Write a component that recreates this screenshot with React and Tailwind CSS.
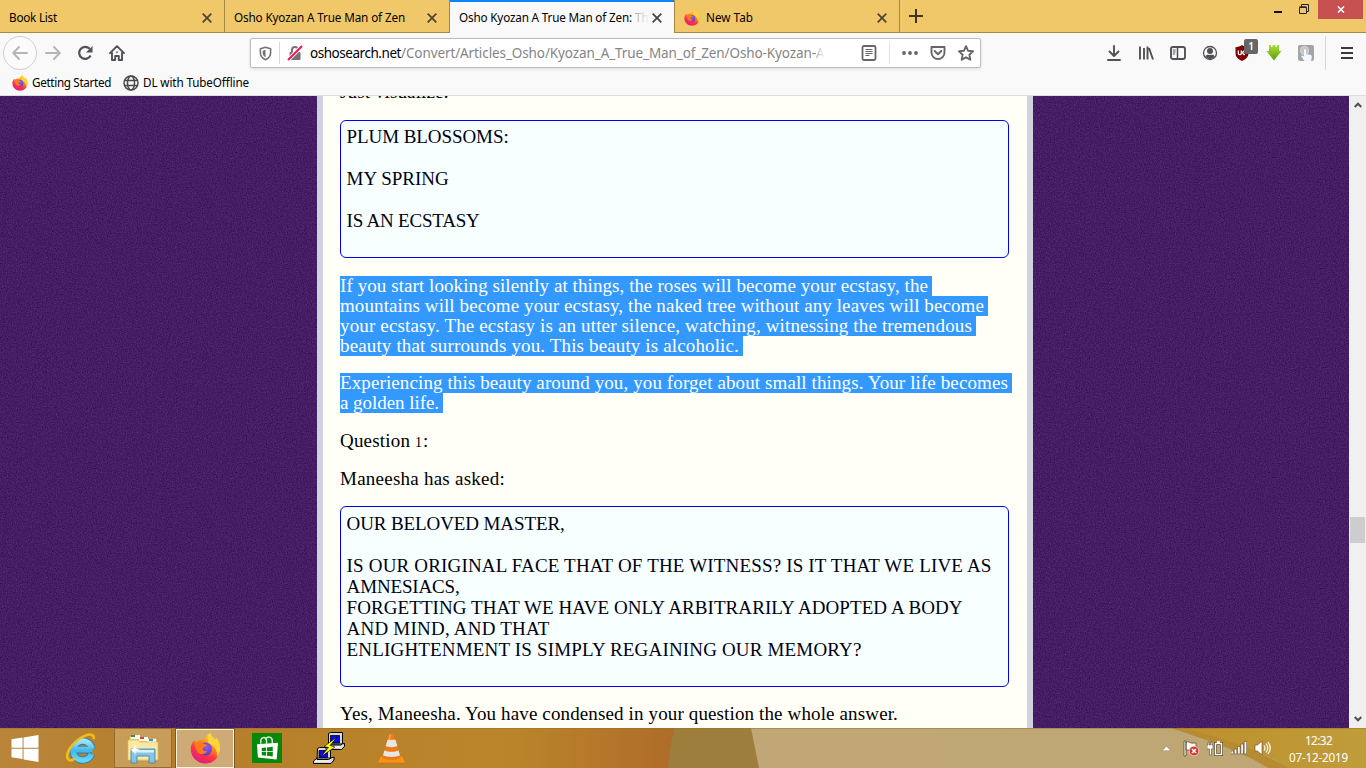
import React, { useLayoutEffect, useRef, useState } from "react";

/* A single line of text spaced evenly to a given width. */
function Fit({ w, className = "", children }) {
  const ref = useRef(null);
  const [gap, setGap] = useState(0);
  useLayoutEffect(() => {
    const natural = ref.current.getBoundingClientRect().width;
    setGap((w - natural) / children.length);
  }, [w, children]);
  return (
    <span ref={ref} className={"inline-block whitespace-pre " + className} style={{ letterSpacing: gap + "px" }}>
      {children}
    </span>
  );
}

function Firefox({ className, id }) {
  return (
    <svg viewBox="0 0 32 32" className={className}>
      <defs>
        <linearGradient id={id + "a"} x1="0.8" y1="0" x2="0.25" y2="1">
          <stop offset="0" stopColor="#fff44f" />
          <stop offset="0.35" stopColor="#ff980e" />
          <stop offset="0.65" stopColor="#ff3647" />
          <stop offset="1" stopColor="#e31587" />
        </linearGradient>
        <radialGradient id={id + "b"} cx="0.6" cy="0.35" r="0.7">
          <stop offset="0" stopColor="#9059ff" />
          <stop offset="1" stopColor="#4a3fb5" />
        </radialGradient>
      </defs>
      <path fill={"url(#" + id + "a)"} d="M4 8c1 1 2 1.500 3 1.500C9 7 12 6.500 15 7c1-3 3-5.500 6-7 .5 3 3 4 5 7 1-.5 1-1 1-2 2.500 3 4 6.500 4 11 0 9-6.500 15.500-15 15.500S.8 25 .8 16.500C.8 13 2 10.500 4 8z" />
      <path fill="#ffd43a" d="M21 0c.5 3 3 4 5 7 1-.5 1-1 1-2 2.500 3 4 6.500 4 11 0 3-1 6-3 9 .5-7-3-12-9-15-2-3 0-7 2-10z" />
      <circle cx="16" cy="16.500" r="6.600" fill={"url(#" + id + "b)"} />
      <path fill="#ff7b1c" d="M4 8c1 1 2 1.500 3 1.500 2-1 5-1 6.500 1 1 1 3 1.500 4 1.500-.4 2.500-4 2-4.500 4-.3 2 2 3.500 5 2.500-2 4-8 4.500-10.500.500C5 16 5 12 4 8z" />
    </svg>
  );
}

function Cross({ className = "" }) {
  return (
    <svg viewBox="0 0 10 10" className={"h-[10px] w-[10px] shrink-0 " + className} fill="none" stroke="#4a4335" strokeWidth="1.7">
      <path d="M.7.7l8.600 8.600M9.300.7L.7 9.300" />
    </svg>
  );
}

function TabStrip() {
  const tab = "flex h-[33px] shrink-0 items-center border-r border-b border-[#a58845] pr-[12px] pl-[9px] pt-[3px]";
  return (
    <div className="flex h-[33px] bg-[#f0c869] font-['Noto_Sans',sans-serif] text-[11.7px] text-black">
      <div className={tab + " w-[225px]"}>
        <Fit w={48}>Book List</Fit>
        <Cross className="ml-auto" />
      </div>
      <div className={tab + " w-[225px]"}>
        <Fit w={171}>Osho Kyozan A True Man of Zen</Fit>
        <Cross className="ml-auto" />
      </div>
      <div className="flex h-[33px] w-[224px] shrink-0 items-center border-t-2 border-[#0a84ff] bg-[#f9f9fa] pr-[12px] pl-[9px]">
        <span className="flex w-[189px] whitespace-nowrap">
          <Fit w={173}>Osho Kyozan A True Man of Zen:</Fit>
          <span className="bg-gradient-to-r from-[#999] to-[#f3f3f4] bg-clip-text pl-[3px] text-transparent">Th</span>
        </span>
        <Cross className="ml-auto" />
      </div>
      <div className={tab + " w-[226px] border-l"}>
        <Firefox className="h-4 w-4" id="t" />
        <Fit w={47} className="ml-[6px]">New Tab</Fit>
        <Cross className="ml-auto" />
      </div>
      <div className="flex flex-1 items-start border-b border-[#a58845]">
        <svg viewBox="0 0 14 14" className="mt-[9px] ml-[9px] h-[14px] w-[14px]" stroke="#3d3420" strokeWidth="2">
          <path d="M7 0v14M0 7h14" />
        </svg>
        <svg viewBox="0 0 8 3" className="mt-[11px] ml-auto h-[2px] w-[8px]" preserveAspectRatio="none"><path fill="#111" d="M0 0h8v3H0z" /></svg>
        <svg viewBox="0 0 10 10" className="mt-[4px] ml-[17px] h-[10px] w-[10px]" fill="none" stroke="#222">
          <path d="M.5 3.500h7v6h-7zM.5 2.800h7M2.500 2.500V.5h7v7h-2" />
        </svg>
        <div className="ml-[9px] flex h-[19px] w-[45px] items-center justify-center bg-[#c75050]">
          <svg viewBox="0 0 8 8" className="h-[7px] w-[8px]" stroke="#fff" strokeWidth="1.700"><path d="M.5.5l7 7M7.500.5l-7 7" /></svg>
        </div>
        <div className="w-[3px]" />
      </div>
    </div>
  );
}

const ico = "h-4 w-4 shrink-0";
const stroke = { fill: "none", stroke: "#505055", strokeWidth: 1.9, strokeLinecap: "round", strokeLinejoin: "round" };

function Toolbar() {
  return (
    <div className="flex h-[40px] items-center bg-[#f9f9fa] pl-[3px]">
      <div className="flex h-[34px] w-[34px] items-center justify-center rounded-full border border-[#cfcfd1] bg-[#fbfbfb]">
        <svg viewBox="0 0 16 16" className={ico} {...stroke} stroke="#b5b5b6"><path d="M15 8H1.500M7 2L1.200 8 7 14" /></svg>
      </div>
      <svg viewBox="0 0 16 16" className={ico + " ml-[8px]"} {...stroke} stroke="#b5b5b6"><path d="M1 8h13.500M9 2l5.800 6L9 14" /></svg>
      <svg viewBox="0 0 16 16" className={ico + " ml-[16px]"} {...stroke} strokeWidth="2.200" strokeLinecap="butt"><path d="M13.600 10.500a6 6 0 1 1-1-6.700" /><path fill="#505055" stroke="none" d="M15.500 1v6.500H9z" /></svg>
      <svg viewBox="0 0 16 16" className={ico + " ml-[16px]"} {...stroke}><path d="M1 8.200L8 1.200l7 7M3 8v7h3.200v-4h3.600v4H13V8" /><path strokeWidth="1.500" d="M8 7v.5" /></svg>

      <div className="ml-[125px] flex h-[30px] w-[731px] shrink-0 items-center rounded-[2px] border border-[#bdbdbf] bg-white pl-[8px] shadow-[0_1px_3px_rgba(0,0,0,0.12)]">
        <svg viewBox="0 0 14 16" className="h-[15px] w-[13px]" {...stroke} stroke="#737373" strokeWidth="1.700"><path d="M7 1.200l5.500 1.600v4.500c0 3.500-2 6-5.500 7.500C3.500 13.300 1.500 10.800 1.500 7.300V2.800z" /><path fill="#737373" stroke="none" d="M7 4v8C5 11 4 9.500 4 7.200V5z" /></svg>
        <div className="mx-[7px] h-[22px] w-px bg-[#d7d7db]" />
        <svg viewBox="0 0 16 16" className={ico}><path fill="none" stroke="#737373" strokeWidth="2" d="M5 8V5a3 3 0 0 1 6 0v3" /><rect x="2.500" y="7" width="11" height="8" rx="1" fill="#737373" /><path stroke="#fff" strokeWidth="4" d="M1 15L15 1" /><path stroke="#ff0f4f" strokeWidth="2" d="M1 15L15 1" /></svg>
        <div className="ml-[7px] flex w-[518px] overflow-hidden pt-[1px] font-['Noto_Sans',sans-serif] text-[13.5px] whitespace-nowrap">
          <Fit w={91} className="text-black">oshosearch.net</Fit>
          <Fit w={415} className="text-[#858585]">/Convert/Articles_Osho/Kyozan_A_True_Man_of_Zen/Osho-Kyozan-</Fit>
          <span className="bg-gradient-to-r from-[#aaa] to-white bg-clip-text text-transparent">A</span>
        </div>
        <svg viewBox="0 0 16 16" className={ico + " ml-[33px]"} {...stroke} stroke="#66666a" strokeWidth="1.800"><rect x="1.500" y="1" width="13" height="14" rx="1.500" /><path strokeWidth="1.100" strokeLinecap="butt" d="M4.500 4.500h7M4.500 6.500h7M4.500 8.500h7M4.500 10.500h4" /></svg>
        <div className="ml-[12px] h-[22px] w-px bg-[#e3e3e6]" />
        <svg viewBox="0 0 16 16" className={ico + " ml-[12px]"} fill="#66666a"><circle cx="2" cy="8" r="1.900" /><circle cx="8" cy="8" r="1.900" /><circle cx="14" cy="8" r="1.900" /></svg>
        <svg viewBox="0 0 16 16" className={ico + " ml-[12px]"} {...stroke} stroke="#66666a"><path d="M1.500 2h13v5.500a6.500 6.500 0 0 1-13 0zM4.700 6L8 9.200 11.300 6" /></svg>
        <svg viewBox="0 0 16 16" className={ico + " ml-[12px]"} {...stroke} stroke="#66666a" strokeWidth="1.900"><path d="M8 1.200l2 4.500 5 .6-3.600 3.400.9 5L8 12.300l-4.300 2.400.9-5L1 6.300l5-.6z" /></svg>
      </div>

      <svg viewBox="0 0 16 16" className={ico + " ml-[125px]"} {...stroke}><path d="M8 1v9.500M3.500 6.500L8 11l4.500-4.500M2 15h12" /></svg>
      <svg viewBox="0 0 16 16" className={ico + " ml-[16px]"} {...stroke} strokeLinecap="butt"><path d="M2 1.500v13M6 3v11.500M9.500 1.500v13M11 3l4 11.500" /></svg>
      <svg viewBox="0 0 16 16" className={ico + " ml-[16px]"} {...stroke}><rect x="1" y="2" width="14" height="12" rx="2" /><path strokeWidth="1.500" d="M7.500 2v12" /><path strokeWidth="1" d="M3.200 5h2M3.200 7h2M3.200 9h1.500" /></svg>
      <svg viewBox="0 0 16 16" className={ico + " ml-[16px]"} {...stroke} strokeWidth="1.300"><circle cx="8" cy="8" r="6.500" /><circle cx="8" cy="6" r="3" fill="#505055" stroke="none" /><path fill="#505055" stroke="none" d="M3.200 11.500C5 9 6 10 8 10s3-1 4.800 1.500C11 13.500 9.500 14 8 14s-3-.5-4.800-2.500z" /></svg>
      <div className="relative ml-[16px] h-4 w-4 shrink-0">
        <svg viewBox="0 0 16 16" className="h-4 w-4"><path fill="#800000" d="M8 0c2 1.500 4 2 6.500 2.300V8c0 4-2.500 6.200-6.500 8-4-1.800-6.500-4-6.500-8V2.300C4 2 6 1.500 8 0z" /><path fill="none" stroke="#fff" strokeWidth="1.300" d="M4.300 5.500v3c0 1.500 3 1.500 3 0v-3M11 9.500c-3 .5-3-4 0-3.500" /></svg>
        <span className="absolute -top-[6px] left-[10px] flex h-[15px] w-[14px] items-center justify-center rounded-[2px] bg-[#666] font-['Noto_Sans',sans-serif] text-[10px] font-semibold text-white">1</span>
      </div>
      <svg viewBox="0 0 16 16" className={ico + " ml-[16px]"}><defs><linearGradient id="dg" x2="0" y2="1"><stop offset="0" stopColor="#a8df35" /><stop offset="1" stopColor="#5f9d10" /></linearGradient></defs><path fill="url(#dg)" d="M3 0h2v2h1.500V0h3v2H11V0h2v6h2.500L8 15.500.5 6H3z" /></svg>
      <svg viewBox="0 0 16 16" className={ico + " ml-[16px]"}><rect width="16" height="16" rx="2" fill="#a5a5a5" /><circle cx="6.500" cy="5.500" r="4" fill="#c5c5c5" stroke="#ddd" /><path fill="#f2f8ff" d="M6 5c0-1.500 2-1.500 2 0v4l5 1c1 .5 1 2 0 6H6.500L3 11c1-1 2-.5 3 .5z" /></svg>
      <div className="ml-[11px] h-[34px] w-px bg-[#d7d7db]" />
      <svg viewBox="0 0 14 14" className="ml-[15px] h-[14px] w-[12px]" stroke="#38383d" strokeWidth="2" preserveAspectRatio="none"><path d="M0 2h14M0 7h14M0 12h14" /></svg>
    </div>
  );
}

function Bookmarks() {
  return (
    <div className="flex h-[23px] items-center border-b border-[#dcdcde] bg-[#f9f9fa] pb-[2px] pl-[12px] font-['Noto_Sans',sans-serif] text-[11.7px] text-black">
      <Firefox className="h-4 w-4" id="bm" />
      <Fit w={79} className="ml-[4px]">Getting Started</Fit>
      <svg viewBox="0 0 16 16" className={ico + " ml-[12px]"} fill="none" stroke="#4a4a4f" strokeWidth="1.500"><circle cx="8" cy="8" r="7" /><ellipse cx="8" cy="8" rx="3.500" ry="7" /><path d="M1.500 5.500h13M1.500 10.500h13" /></svg>
      <Fit w={106} className="ml-[4px]">DL with TubeOffline</Fit>
    </div>
  );
}

function Texture({ id, className }) {
  return (
    <div className={"h-full overflow-hidden bg-[#451c63] " + className}>
      <svg className="h-full w-full">
        <filter id={id} x="0" y="0" width="100%" height="100%" colorInterpolationFilters="sRGB">
          <feTurbulence type="fractalNoise" baseFrequency="0.8" numOctaves="2" seed="4" />
          <feColorMatrix values=".2 0 0 0 .17  .17 0 0 0 .03  .2 0 0 0 .295  0 0 0 0 1" />
        </filter>
        <rect width="100%" height="100%" filter={"url(#" + id + ")"} />
      </svg>
    </div>
  );
}

function Line({ w, selected, children }) {
  return (
    <div className="flex h-[20px] items-center leading-[20px]">
      <span className={selected ? "h-[20px] bg-[#3399ff] pr-[4px] text-white" : ""}>
        <Fit w={w}>{children}</Fit>
      </span>
    </div>
  );
}

function Verse({ lines, className = "" }) {
  return (
    <div className={"w-[669px] rounded-[6px] border border-[#0000f0] bg-[#f7ffff] p-[5px] pl-[5.600px] text-[#000010] " + className}>
      {lines.map(([text, w], i) => (
        <div key={i} className="h-[21px] leading-[21px]">{text && <Fit w={w}>{text}</Fit>}</div>
      ))}
    </div>
  );
}

function Page() {
  return (
    <div className="flex h-[632px] overflow-hidden">
      <Texture id="n1" className="w-[317px]" />
      <div className="h-full w-[716px] overflow-hidden border-x-[6px] border-[#d0d0df] bg-[#fffff8] pl-[17px] font-['Liberation_Serif',serif] text-[19px] text-black">
        <div className="-mt-[14px] flex flex-col">
          <Line w={109}>Just visualize:</Line>
          <div className="mt-[18px]">
            <Verse lines={[["PLUM BLOSSOMS:", 162], ["", 0], ["MY SPRING", 102], ["", 0], ["IS AN ECSTASY", 133], ["", 0]]} />
          </div>
          <div className="mt-[18px]">
            <Line selected w={588}>If you start looking silently at things, the roses will become your ecstasy, the</Line>
            <Line selected w={644}>mountains will become your ecstasy, the naked tree without any leaves will become</Line>
            <Line selected w={632}>your ecstasy. The ecstasy is an utter silence, watching, witnessing the tremendous</Line>
            <Line selected w={399}>beauty that surrounds you. This beauty is alcoholic.</Line>
          </div>
          <div className="mt-[17px]">
            <Line selected w={668}>Experiencing this beauty around you, you forget about small things. Your life becomes</Line>
            <Line selected w={99}>a golden life.</Line>
          </div>
          <div className="mt-[18px] flex h-[20px] items-baseline leading-[20px]">
            <Fit w={75}>{"Question "}</Fit>
            <Fit w={8} className="text-[14px]">1</Fit>
            <Fit w={5}>:</Fit>
          </div>
          <div className="mt-[18px]"><Line w={165}>Maneesha has asked:</Line></div>
          <div className="mt-[17px]">
            <Verse
              className="pt-[6px]"
              lines={[
                ["OUR BELOVED MASTER,", 218],
                ["", 0],
                ["IS OUR ORIGINAL FACE THAT OF THE WITNESS? IS IT THAT WE LIVE AS", 645],
                ["AMNESIACS,", 113],
                ["FORGETTING THAT WE HAVE ONLY ARBITRARILY ADOPTED A BODY", 616],
                ["AND MIND, AND THAT", 203],
                ["ENLIGHTENMENT IS SIMPLY REGAINING OUR MEMORY?", 515],
                ["", 0],
              ]}
            />
          </div>
          <div className="mt-[17px]"><Line w={558}>Yes, Maneesha. You have condensed in your question the whole answer.</Line></div>
        </div>
      </div>
      <Texture id="n2" className="w-[316px]" />
      <div className="flex w-[17px] flex-col items-center bg-[#f0f0f0]">
        <svg viewBox="0 0 8 6" className="mt-[6px] h-[6px] w-[8px]" fill="none" stroke="#505050" strokeWidth="2"><path d="M.7 5L4 1.700 7.300 5" /></svg>
        <div className="mt-[409px] h-[26px] w-[15px] bg-[#cdcdcd]" />
        <svg viewBox="0 0 8 6" className="mt-auto mb-[6px] h-[6px] w-[8px]" fill="none" stroke="#505050" strokeWidth="2"><path d="M.7 1L4 4.300 7.300 1" /></svg>
      </div>
    </div>
  );
}

function Taskbar() {
  return (
    <div className="relative flex h-[40px] items-center overflow-hidden">
      <svg className="absolute inset-0 h-full w-full" viewBox="0 0 1366 40" preserveAspectRatio="none">
        <defs>
          <linearGradient id="tb1"><stop offset="0" stopColor="#b9853a" /><stop offset=".25" stopColor="#b67e2c" /><stop offset=".75" stopColor="#ba852a" /><stop offset=".88" stopColor="#b5782a" /><stop offset="1" stopColor="#ad6b28" /></linearGradient>
          <linearGradient id="tb2"><stop offset="0" stopColor="#c0a775" /><stop offset="1" stopColor="#bea775" /></linearGradient>
          <linearGradient id="tb3"><stop offset="0" stopColor="#bd902d" /><stop offset="1" stopColor="#c09c3b" /></linearGradient>
        </defs>
        <path fill="url(#tb1)" d="M0 0h680v40H0z" />
        <path fill="#9e7e3d" d="M674 0h90v40h-96c1-15 4-28 6-40z" />
        <path fill="url(#tb2)" d="M751 0h460l120 40H759z" />
        <path fill="#b68b32" d="M1170 0h40l80 40h-22c-25-16-60-28-98-40z" />
        <path fill="url(#tb3)" d="M1185 0h181v40h-78c-20-15-60-28-103-40z" />
        <path fill="#9d6f2a" opacity=".5" d="M0 0h1366v1H0z" />
      </svg>
      <div className="relative flex h-full w-full items-center">
        <svg viewBox="0 0 28 28" className="ml-[11px] h-[27px] w-[28px]" fill="#fff"><path d="M0 4.500l11.500-1.800v10.500H0zM12.500 2.500L28 0v13.200H12.500zM0 14.300h11.500v10.600L0 23zM12.500 14.300H28V28l-15.500-2.500z" /></svg>
        <svg viewBox="0 0 32 32" className="ml-[26px] h-[32px] w-[32px]">
          <defs><linearGradient id="ieg" x2="0" y2="1"><stop offset="0" stopColor="#9be4fb" /><stop offset=".5" stopColor="#43b7ec" /><stop offset="1" stopColor="#65d5f8" /></linearGradient></defs>
          <path fill="none" stroke="#207cae" strokeWidth="7.200" d="M27 18H10M26.500 22a9.500 9.500 0 1 1 .5-5" />
          <path fill="none" stroke="url(#ieg)" strokeWidth="5.600" d="M27.500 17.600L9 17.590M26.500 22a9.500 9.500 0 1 1 .5-5" />
          <path fill="none" stroke="#f4bd16" strokeWidth="2.600" d="M4 28C-1 25 5 13 14 7S30 1 28.500 7M4 28c1.500 1 4 0 6-1.500" />
        </svg>
        <div className="ml-[17px] flex h-[40px] w-[58px] items-center justify-center border border-[#d5b37c] bg-[#c79d59] outline-1 -outline-offset-1 outline-[#956c2d]">
          <svg viewBox="0 0 34 32" className="h-[32px] w-[34px]">
            <path fill="#eac96a" stroke="#b78d37" strokeWidth=".7" d="M3 4h9l1 2h18v23H3z" />
            <path fill="#fff" d="M5 3h9v4H5zM13 5h9v4h-9zM21 7h9v4h-9z" />
            <path fill="#1ea33b" d="M5 3h4v2H5z" /><path fill="#d7462b" d="M14 5h4v2h-4z" /><path fill="#2f91d8" d="M23 7h4v2h-4z" />
            <path fill="#fbe8a2" stroke="#d9b95a" strokeWidth=".7" d="M2 8h10l2 2h18v18H2z" />
            <path fill="#86c4e6" stroke="#3e8ab2" strokeWidth=".9" d="M5 17h24v14h-6v-7H11v7H5z" />
            <path fill="#d9f0fa" d="M6 18h22v2.500H6z" />
            <path fill="#fff" d="M9 11l.8 5 4.200 2-4.200 1L9 24l-.8-5L4 18l4.200-2z" />
          </svg>
        </div>
        <div className="ml-[4px] flex h-[39px] w-[58px] items-center justify-center border border-[#fff4dc] bg-[#ceab76] outline-1 outline-[#7b5829]">
          <Firefox className="h-[31px] w-[31px]" id="tk" />
        </div>
        <div className="ml-[18px] flex h-[30px] w-[30px] items-center justify-center bg-[#088808]">
          <svg viewBox="0 0 24 26" className="h-[25px] w-[23px]"><path fill="none" stroke="#d7efd7" strokeWidth="1.500" d="M5 8V5c0-4 6-5 6 0v3M10 4c2-5 7-3 7 1v3" /><path fill="#fff" d="M1 8.500L23 7l-1.500 17.500L2 22.500z" /><path fill="#088808" d="M6 12.500l4.500-.5v3.800H6zM11.500 11.900l6-.7v4.600h-6zM6 16.700h4.500v3.800L6 20zM11.500 16.700h6v4.600l-6-.7z" /></svg>
        </div>
        <svg viewBox="0 0 32 32" className="ml-[31px] h-[32px] w-[32px]">
          <path fill="#d8d8d8" stroke="#000" d="M15.500 1.500l2-1h12v11l-2 1.500h-12zM13 15.500l2.500-3.500h13l3-.5v3l-3 3H13zM4.500 16.500l2-1h11v11l-2 1H4zM.5 29l3.500-3h14l3-1v3l-3 3.500H.5z" />
          <path fill="#0808e8" stroke="#000" strokeWidth=".8" d="M17.500 3.500h9v7.500h-9zM6 18.500h8.500v7H6z" />
          <path fill="none" stroke="#fff" strokeWidth="1" d="M15 15h13M2 29h15" />
          <path fill="#ffff20" stroke="#000" strokeWidth=".6" d="M24 5l-13 9.500 4.500 1L8 24.500 22 15l-5-1.500z" />
        </svg>
        <svg viewBox="0 0 28 32" className="ml-[33px] h-[32px] w-[27px]">
          <path fill="#f6921e" stroke="#c96a0a" strokeWidth=".5" d="M3 24h22l3 6v1.500H0V30z" />
          <path fill="#ee7a10" d="M11.500 2c1-.8 4-.8 5 0L23.500 26c-4 3-15 3-19 0z" />
          <path fill="#e6e6e6" d="M9.900 7.500h8.200l1.900 6.500c-3 1.500-9 1.500-12 0zM6.700 18.500c4 1.800 10.600 1.800 14.600 0l1.500 5c-4.500 2.300-13 2.300-17.600 0z" />
          <path fill="#ffb45e" opacity=".7" d="M12 2h1.700L12.500 7.500h-2.200z" />
        </svg>
        <svg viewBox="0 0 8 4" className="ml-auto h-[5px] w-[9px]"><path fill="#fff" stroke="#7b6844" strokeWidth=".4" d="M4 0l4 4H0z" /></svg>
        <svg viewBox="0 0 17 17" className="ml-[12px] h-[17px] w-[17px]"><path fill="#fff" stroke="#5b4725" strokeWidth=".8" d="M1 1h2v15H1zM3 2c4-1 4 2 8 1h2v7H3z" /><circle cx="11" cy="11" r="4.800" fill="#d8332b" stroke="#fff" strokeWidth=".6" /><path stroke="#fff" strokeWidth="1.600" d="M9 9l4 4M13 9l-4 4" /></svg>
        <svg viewBox="0 0 16 16" className="ml-[7px] h-[16px] w-[16px]"><path fill="none" stroke="#5b4725" strokeWidth="3" d="M8.500 3.500h6v11h-6z" /><path fill="none" stroke="#fff" strokeWidth="1.500" d="M8.500 3.500h6v11h-6zM10 2h3" /><path fill="#fff" stroke="#5b4725" strokeWidth=".6" d="M1 2h1.300v3h1.400V2H5v3h1v4H4.500v6h-2V9H0V5h1z" /></svg>
        <svg viewBox="0 0 16 14" className="ml-[8px] h-[14px] w-[16px]" fill="#fff" stroke="#5b4725" strokeWidth=".6"><path d="M0 10h2.500v3H0zM3.300 8h2.500v5H3.300zM6.600 5.500h2.500V13H6.600zM9.900 3h2.500v10H9.900zM13.200.5h2.500V13h-2.500z" /></svg>
        <svg viewBox="0 0 17 16" className="ml-[7px] h-[16px] w-[17px]" fill="none" stroke="#fff" strokeWidth="1.200"><path fill="#fff" stroke="#5b4725" strokeWidth=".6" d="M1 5h2.500L8 1v14l-4.500-4H1z" /><path d="M10 5.500q2 2.500 0 5M12 3.500q3.500 4.500 0 9M14 2q4.500 6 0 12" /></svg>
        <div className="mr-[17px] ml-[17px] flex w-[61px] flex-col items-center pt-[1px] font-['Noto_Sans',sans-serif] text-[11.7px] leading-[17px] text-white">
          <Fit w={27}>12:32</Fit>
          <Fit w={59}>07-12-2019</Fit>
        </div>
      </div>
    </div>
  );
}

export default function App() {
  return (
    <div className="flex h-[768px] w-[1366px] flex-col overflow-hidden bg-[#f9f9fa]">
      <TabStrip />
      <Toolbar />
      <Bookmarks />
      <Page />
      <Taskbar />
    </div>
  );
}
